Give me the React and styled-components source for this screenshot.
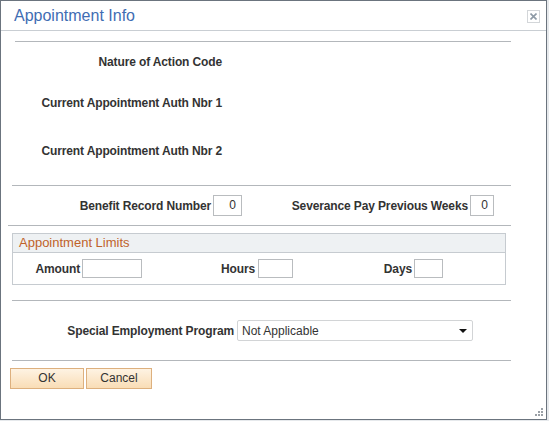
import React from "react";
import styled, { createGlobalStyle } from "styled-components";

const Global = createGlobalStyle`
  html, body { margin: 0; padding: 0; }
  body {
    background: #e6e9ec;
    font-family: "Liberation Sans", Arial, sans-serif;
    font-size: 12px;
    color: #333;
  }
`;

const Dialog = styled.div`
  position: relative;
  box-sizing: border-box;
  width: 547px;
  height: 420px;
  background: #fff;
  border: 1px solid #6b747e;
  display: flex;
  flex-direction: column;
`;

const TitleBar = styled.div`
  height: 29px;
  border-bottom: 1px solid #c9ced3;
  display: flex;
  align-items: center;
  justify-content: space-between;
  padding: 0 6px 0 13px;
`;

const Title = styled.div`
  font-size: 16px;
  color: #3f6db3;
  padding-top: 1px;
`;

const CloseBtn = styled.div`
  box-sizing: border-box;
  width: 13px;
  height: 13px;
  border: 1px solid #d3d6d9;
  display: flex;
  align-items: center;
  justify-content: center;
  margin-top: 2px;
`;

const Body = styled.div`
  display: flex;
  flex-direction: column;
  padding-left: 11px;
`;

const Rule = styled.div`
  height: 1px;
  background: #b3b7bb;
  margin-top: ${(p) => p.$top || 0}px;
  margin-left: ${(p) => p.$left || 0}px;
  width: ${(p) => 499 - (p.$left || 0)}px;
`;

const Row = styled.div`
  display: flex;
  align-items: center;
  height: ${(p) => p.$h}px;
`;

const Label = styled.div`
  box-sizing: border-box;
  width: ${(p) => p.$w}px;
  text-align: right;
  font-weight: bold;
  color: #333;
  white-space: nowrap;
  letter-spacing: -0.13px;
  margin-right: ${(p) => (p.$gap === undefined ? 2 : p.$gap)}px;
`;

const Input = styled.div`
  box-sizing: border-box;
  width: ${(p) => p.$w}px;
  height: ${(p) => p.$h || 21}px;
  border: 1px solid #b9bcbf;
  background: #fff;
  text-align: right;
  padding-right: 5px;
  line-height: ${(p) => (p.$h || 21) - 2}px;
  color: #333;
`;

const Group = styled.div`
  box-sizing: border-box;
  margin-top: 7px;
  width: 494px;
  border: 1px solid #c6cbd0;
`;

const GroupHeader = styled.div`
  height: 18px;
  background: #eef1f3;
  border-bottom: 1px solid #c6cbd0;
  color: #c0622a;
  font-size: 13px;
  line-height: 18px;
  padding-left: 6px;
`;

const Select = styled.div`
  box-sizing: border-box;
  width: 236px;
  height: 21px;
  border: 1px solid #d2d4d6;
  border-radius: 2px;
  display: flex;
  align-items: center;
  justify-content: space-between;
  padding: 0 5px 0 4px;
  color: #333;
`;

const Buttons = styled.div`
  display: flex;
  gap: 2px;
  margin-top: 7px;
  margin-left: -2px;
`;

const Button = styled.div`
  box-sizing: border-box;
  width: ${(p) => p.$w}px;
  height: 21px;
  border: 1px solid #ddb07e;
  background: linear-gradient(#fef3e3, #f9ddb6);
  text-align: center;
  line-height: 19px;
  color: #333;
`;

const Grip = styled.svg`
  position: absolute;
  right: 3px;
  bottom: 3px;
`;

export default function App() {
  return (
    <>
      <Global />
      <Dialog>
        <TitleBar>
          <Title>Appointment Info</Title>
          <CloseBtn>
            <svg width="7" height="7" viewBox="0 0 7 7">
              <path d="M0.5 0.5 L6.5 6.5 M6.5 0.5 L0.5 6.5" stroke="#8e9aa6" strokeWidth="1.6" />
            </svg>
          </CloseBtn>
        </TitleBar>
        <Body>
          <Rule $top={10} $left={3} />
          <Row $h={40}>
            <Label $w={210}>Nature of Action Code</Label>
          </Row>
          <Row $h={42}>
            <Label $w={210}>Current Appointment Auth Nbr 1</Label>
          </Row>
          <Row $h={54}>
            <Label $w={210}>Current Appointment Auth Nbr 2</Label>
          </Row>
          <Rule $top={7} />
          <Row $h={39}>
            <Label $w={199}>Benefit Record Number</Label>
            <Input $w={29}>0</Input>
            <Label $w={226}>Severance Pay Previous Weeks</Label>
            <Input $w={24}>0</Input>
          </Row>
          <Rule $left={-4} />
          <Group>
            <GroupHeader>Appointment Limits</GroupHeader>
            <Row $h={31}>
              <Label $w={67}>Amount</Label>
              <Input $w={60} $h={19} />
              <Label $w={113} $gap={3}>Hours</Label>
              <Input $w={35} $h={19} />
              <Label $w={119}>Days</Label>
              <Input $w={29} $h={19} />
            </Row>
          </Group>
          <Rule $top={15} />
          <Row $h={59}>
            <Label $w={222} $gap={3}>Special Employment Program</Label>
            <Select>
              <span>Not Applicable</span>
              <svg width="8" height="4" viewBox="0 0 8 4">
                <path d="M0 0 L8 0 L4 4 Z" fill="#111" />
              </svg>
            </Select>
          </Row>
          <Rule />
          <Buttons>
            <Button $w={74}>OK</Button>
            <Button $w={66}>Cancel</Button>
          </Buttons>
        </Body>
        <Grip width="9" height="9" viewBox="0 0 9 9">
          <rect x="7" y="1" width="2" height="2" fill="#9aa0a6" />
          <rect x="4" y="4" width="2" height="2" fill="#9aa0a6" />
          <rect x="7" y="4" width="2" height="2" fill="#9aa0a6" />
          <rect x="1" y="7" width="2" height="2" fill="#9aa0a6" />
          <rect x="4" y="7" width="2" height="2" fill="#9aa0a6" />
          <rect x="7" y="7" width="2" height="2" fill="#9aa0a6" />
        </Grip>
      </Dialog>
    </>
  );
}
